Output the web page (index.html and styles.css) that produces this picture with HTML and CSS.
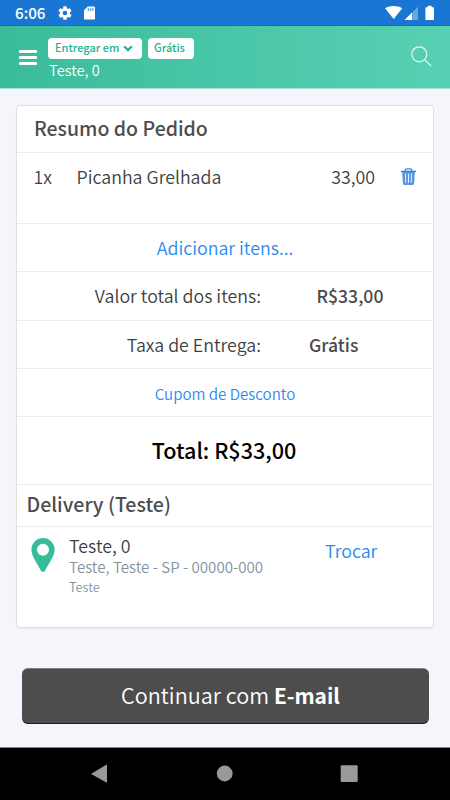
FILE: index.html
```html
<!DOCTYPE html>
<html lang="pt-BR">
<head>
<meta charset="utf-8">
<title>Resumo do Pedido</title>
<link rel="stylesheet" href="styles.css">
</head>
<body>
<div class="statusbar">
  <span class="clock">6:06</span>
  <svg class="gear" viewBox="0 0 24 24"><path fill="#fff" fill-rule="evenodd" d="M19.4 13a7.800 7.800 0 0 0 0-2l2.100-1.650a.5.5 0 0 0 .12-.64l-2-3.460a.5.5 0 0 0-.61-.22l-2.490 1a7.300 7.300 0 0 0-1.690-.98l-.38-2.650A.49.490 0 0 0 14 2h-4a.49.490 0 0 0-.49.420l-.38 2.650c-.61.250-1.170.590-1.690.980l-2.490-1a.5.5 0 0 0-.61.220l-2 3.460a.5.5 0 0 0 .12.640L4.600 11a7.900 7.900 0 0 0 0 2l-2.110 1.650a.5.5 0 0 0-.12.640l2 3.460c.12.220.390.300.610.220l2.490-1c.52.400 1.080.730 1.690.980l.38 2.650c.03.240.240.420.490.420h4c.25 0 .46-.18.490-.42l.38-2.650a7.700 7.700 0 0 0 1.690-.98l2.490 1c.23.090.490 0 .61-.22l2-3.460a.5.5 0 0 0-.12-.64zM12 15.500a3.500 3.500 0 1 1 0-7 3.500 3.500 0 0 1 0 7z"/></svg>
  <svg class="sd" viewBox="0 0 12 14"><path fill="#fff" d="M4 0h7a1 1 0 0 1 1 1v12a1 1 0 0 1-1 1H1a1 1 0 0 1-1-1V4z"/><path fill="#1976d2" fill-opacity=".75" d="M4 1.800h1.500v2.700H4zM6.400 1.800h1.500v2.700H6.400zM8.800 1.800h1.500v2.700H8.800z"/></svg>
  <svg class="signals" viewBox="0 0 50 16"><path fill="#fff" d="M0 3.200C5 .1 12.300.1 17.300 3.200L8.700 14z"/><path fill="#fff" fill-opacity=".35" d="M27 7.700 33 1.800V15h-6z"/><path fill="#fff" d="M19.500 15 27 7.600V15z"/><path fill="#fff" d="M42.700.8h4v1.400h1.500a.8.8 0 0 1 .8.800v11.200a.8.8 0 0 1-.8.800h-7a.8.8 0 0 1-.8-.8V3a.8.8 0 0 1 .8-.8h1.500z"/></svg>
</div>
<header class="topbar">
  <div class="menu"><span></span><span></span><span></span></div>
  <div class="place">
    <div class="chips">
      <span class="chip">Entregar em<svg class="chevron" viewBox="0 0 10 7"><path d="M1.200 1.300 5 5.100 8.800 1.300" fill="none" stroke="#1db48f" stroke-width="2.300"/></svg></span>
      <span class="chip">Grátis</span>
    </div>
    <div class="street">Teste, 0</div>
  </div>
  <svg class="search" viewBox="0 0 21 21"><circle cx="8.300" cy="8.300" r="7.500"/><path d="m13.700 13.700 6.500 6.500"/></svg>
</header>
<main>
  <section class="card">
    <h2 class="row title">Resumo do Pedido</h2>
    <div class="row item">
      <span>1x</span><span>Picanha Grelhada</span><span class="price">33,00</span>
      <svg class="trash" viewBox="0 0 15 17"><path fill="none" stroke="#3b8be6" stroke-width="1.200" d="M4.300 3V1.800a1 1 0 0 1 1-1h4.400a1 1 0 0 1 1 1V3"/><path fill="#2a86e8" d="M0 2.700h15v1.400H0z"/><path fill="#5596e8" d="M1.200 4h12.600l-.7 11.600a1.300 1.300 0 0 1-1.300 1.300H3.200a1.300 1.300 0 0 1-1.300-1.300z"/><path stroke="#fff" stroke-width=".9" d="m4.500 5.500.3 9.200M7.500 5.500v9.200M10.500 5.500l-.3 9.200"/></svg>
    </div>
    <div class="row center link add">Adicionar itens...</div>
    <div class="row sum items"><span class="label">Valor total dos itens:</span><b class="amount">R$33,00</b></div>
    <div class="row sum fee"><span class="label">Taxa de Entrega:</span><b class="free">Grátis</b></div>
    <div class="row center link coupon">Cupom de Desconto</div>
    <div class="row center total">Total: R$33,00</div>
    <h2 class="row delivery">Delivery (Teste)</h2>
    <div class="address">
      <svg class="pin" viewBox="0 0 24 34"><path fill="#36bb9b" fill-rule="evenodd" d="M12 0a11.600 11.600 0 0 1 11.600 11.600c0 6.800-6 14-9.100 20.500Q13.600 34 12 34t-2.500-1.900C6.400 25.600.4 18.400.4 11.600A11.600 11.600 0 0 1 12 0zm0 5.700a6 6 0 1 0 0 12 6 6 0 0 0 0-12z"/></svg>
      <div class="lines">
        <div class="line1">Teste, 0</div>
        <div class="line2">Teste, Teste - SP - 00000-000</div>
        <div class="line3">Teste</div>
      </div>
      <span class="link change">Trocar</span>
    </div>
  </section>
  <div class="button">Continuar com <b>E-mail</b></div>
</main>
<nav class="navbar">
  <svg viewBox="0 0 450 52"><path fill="#999" d="M106.300 16.700q.7-.3.700.6v16.800q0 .9-.7.500L91.700 26.200q-.6-.4 0-.8z"/><circle fill="#999" cx="224.700" cy="25.500" r="7.900"/><rect fill="#999" x="340.700" y="17.200" width="17" height="16.700" rx="1"/></svg>
</nav>
</body>
</html>
```
FILE: styles.css
```css
* { box-sizing: border-box; }

body {
  margin: 0;
  width: 450px;
  height: 800px;
  overflow: hidden;
  display: flex;
  flex-direction: column;
  background: #f5f6fb;
  color: #3f3f3f;
  font-family: "Noto Sans CJK JP", "Noto Sans", sans-serif;
  font-size: 17.8px;
  font-weight: 350;
  line-height: 24px;
  white-space: nowrap;
}

svg { display: block; flex: none; }
b, h2 { font-weight: 500; }

.statusbar {
  height: 26px;
  flex: none;
  display: flex;
  align-items: flex-start;
  padding-left: 15px;
  background: #1976d2;
  border-bottom: 1px solid #1469c6;
  color: #fff;
}
.clock { width: 42px; font-size: 15.2px; font-weight: 500; }
.gear { width: 16px; height: 16px; margin-top: 5px; }
.sd { width: 11px; height: 14px; margin: 6px 0 0 11px; }
.signals { width: 50px; height: 16px; margin: 5px 0 0 290px; }

.topbar {
  height: 63px;
  flex: none;
  display: flex;
  align-items: flex-start;
  padding: 12px 18px 0 19px;
  background: linear-gradient(90deg, #3abc9b, #58d0b3);
  border-bottom: 1px solid #a5e0d3;
  color: #fff;
}
.menu { width: 18px; margin-top: 12px; display: grid; gap: 3px; }
.menu span { height: 3px; border-radius: 1px; background: #fff; }
.place { margin-left: 11px; flex: 1; }
.chips { display: flex; gap: 5.5px; }
.chip {
  display: flex;
  height: 21px;
  padding: 0 7px;
  border-radius: 4px;
  background: #fff;
  color: #1db48f;
  font-size: 11px;
  font-weight: 500;
  line-height: 18px;
}
.chip:first-child { width: 94px; }
.chip:last-child { width: 46px; padding: 0 6.500px; }
.chevron { width: 10px; height: 7px; margin: 7px 0 0 4px; }
.street { padding-left: 1px; font-size: 14.7px; line-height: 22px; }
.search { width: 21px; height: 21px; margin-top: 8px; fill: none; stroke: #eafaf6; stroke-width: 1.2; }

main { flex: 1; padding: 16px 16px 0; }
.card {
  width: 418px;
  height: 523px;
  border: 1px solid #dfe0e2;
  border-radius: 4px;
  background: #fff;
  box-shadow: 0 1px 1px rgba(0, 0, 0, .05);
}
.row { margin: 0; height: 48px; padding-top: 11px; border-bottom: 1px solid #ececec; }
.title { height: 47px; padding: 10px 0 0 17px; font-size: 19.5px; color: #4d4d4d; }
.item { height: 71px; display: grid; grid-template-columns: 43px 1fr auto 15px; padding-left: 16.500px; padding-right: 17px; }
.price { margin-right: 26px; }
.trash { width: 15px; height: 17px; margin-top: 4px; }
.center { text-align: center; }
.link { color: #2b8af0; }
.sum { display: grid; grid-template-columns: 244px 1fr; }
.label { text-align: right; }
.sum b { padding-top: 1px; font-size: 17.6px; color: #4a4a4a; }
.items { height: 49px; }
.amount { padding-left: 55.500px; }
.free { padding-left: 48px; }
.coupon { padding-top: 12px; font-size: 15.1px; }
.total { height: 68px; padding: 21px 2px 0 0; font-size: 21.6px; font-weight: 500; color: #000; }
.delivery { height: 42px; padding: 7px 0 0 9.500px; font-size: 19.6px; color: #4d4d4d; }
.address { display: flex; align-items: flex-start; padding: 7px 0 0 14px; }
.pin { width: 24px; height: 34px; margin-top: 4px; }
.lines { margin-left: 14px; width: 256px; }
.line1 { line-height: 22px; }
.line2 { font-size: 15.1px; line-height: 20px; color: #83929c; }
.line3 { font-size: 12.7px; line-height: 21px; color: #83929c; }
.change { margin-top: 4px; }

.button {
  width: 407px;
  height: 56px;
  margin: 40px 0 0 6px;
  padding: 14px 0 0 10px;
  border-radius: 6px;
  background: #4d4d4d;
  border-top: 1px solid #808080;
  border-bottom: 1px solid #1c1c1c;
  color: #fff;
  font-size: 21.6px;
  text-align: center;
}
.button b { font-weight: 700; font-size: 20.9px; }

.navbar { height: 53px; flex: none; background: #000; border-top: 1px solid #808080; }
```
